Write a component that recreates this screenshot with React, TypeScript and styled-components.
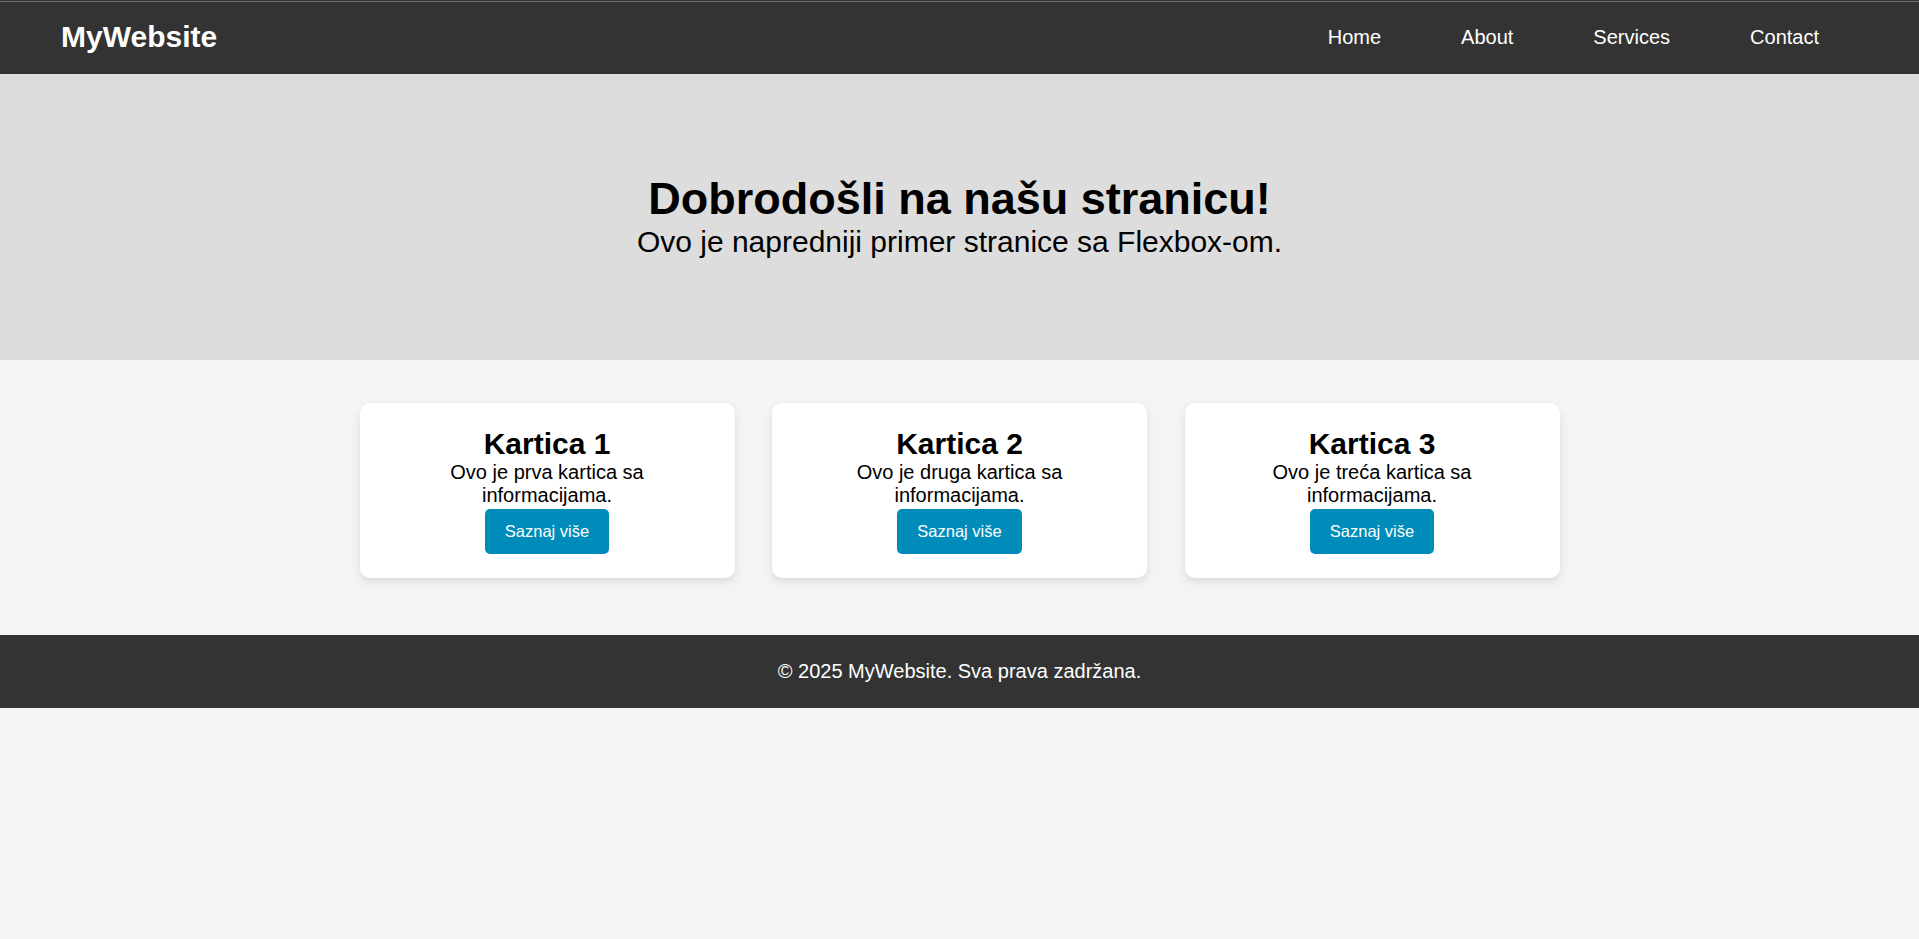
import styled, { createGlobalStyle } from 'styled-components'

const GlobalStyle = createGlobalStyle`
  * {
    box-sizing: border-box;
  }
  body {
    margin: 0;
    background: #f4f4f4;
    font-family: "Liberation Sans", Arial, sans-serif;
    color: #000;
  }
`

type CardData = {
  title: string
  text: string
}

const cards: CardData[] = [
  { title: 'Kartica 1', text: 'Ovo je prva kartica sa informacijama.' },
  { title: 'Kartica 2', text: 'Ovo je druga kartica sa informacijama.' },
  { title: 'Kartica 3', text: 'Ovo je treća kartica sa informacijama.' }
]

const links = ['Home', 'About', 'Services', 'Contact']

export default function App() {
  return (
    <>
      <GlobalStyle />
      <Navbar>
        <Logo>MyWebsite</Logo>
        <NavLinks>
          {links.map((link) => (
            <NavLink key={link} href="#">
              {link}
            </NavLink>
          ))}
        </NavLinks>
      </Navbar>

      <Hero>
        <HeroTitle>Dobrodošli na našu stranicu!</HeroTitle>
        <HeroText>Ovo je napredniji primer stranice sa Flexbox-om.</HeroText>
      </Hero>

      <CardsSection>
        <CardsRow>
          {cards.map((card) => (
            <Card key={card.title}>
              <CardTitle>{card.title}</CardTitle>
              <CardText>{card.text}</CardText>
              <Button>Saznaj više</Button>
            </Card>
          ))}
        </CardsRow>
      </CardsSection>

      <Footer>© 2025 MyWebsite. Sva prava zadržana.</Footer>
    </>
  )
}

// Styled Components
const Navbar = styled.nav`
  display: flex;
  align-items: center;
  justify-content: space-between;
  height: 74px;
  padding: 0 100px 0 61px;
  background: linear-gradient(
    #333 1px,
    #6a6a6a 1px,
    #6a6a6a 2px,
    #333 2px
  );
  color: #fff;
`

const Logo = styled.div`
  font-size: 30px;
  font-weight: 700;
`

const NavLinks = styled.div`
  display: flex;
  gap: 80px;
`

const NavLink = styled.a`
  color: #fff;
  text-decoration: none;
  font-size: 20px;
`

const Hero = styled.header`
  display: flex;
  flex-direction: column;
  align-items: center;
  justify-content: center;
  height: 286px;
  padding-bottom: 2px;
  background: #ddd;
  text-align: center;
`

const HeroTitle = styled.h1`
  margin: 0;
  font-size: 45px;
  font-weight: 700;
`

const HeroText = styled.p`
  margin: 0;
  font-size: 30px;
`

const CardsSection = styled.main`
  padding: 43px 0 57px;
`

const CardsRow = styled.div`
  display: grid;
  grid-template-columns: repeat(3, 1fr);
  gap: 37.5px;
  max-width: 1200px;
  margin: 0 auto;
`

const Card = styled.div`
  display: flex;
  flex-direction: column;
  align-items: center;
  padding: 24px 30px 24px;
  background: #fff;
  border-radius: 10px;
  box-shadow: 0 4px 8px rgba(0, 0, 0, 0.1);
  text-align: center;
`

const CardTitle = styled.h2`
  margin: 0;
  font-size: 30px;
  font-weight: 700;
`

const CardText = styled.p`
  margin: 0;
  font-size: 20px;
`

const Button = styled.button`
  margin-top: 2px;
  padding: 13px 20px;
  border: none;
  border-radius: 5px;
  background: #008cba;
  color: #fff;
  font-family: "Liberation Sans", Arial, sans-serif;
  font-size: 16.5px;
  cursor: pointer;
`

const Footer = styled.footer`
  padding: 25px 0;
  background: #333;
  color: #fff;
  font-size: 20px;
  text-align: center;
`
